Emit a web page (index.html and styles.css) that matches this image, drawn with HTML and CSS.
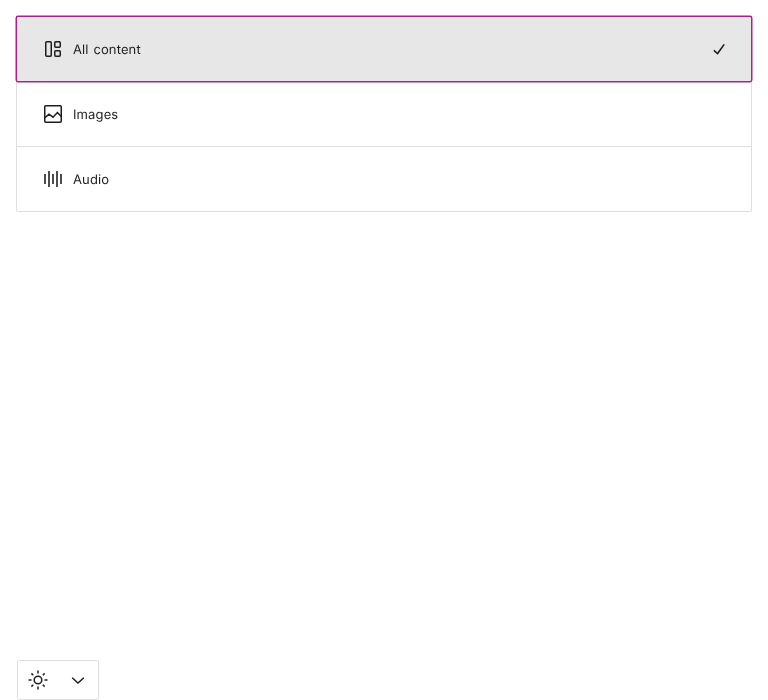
FILE: index.html
```
<!DOCTYPE html>
<html lang="en">
<head>
<meta charset="utf-8">
<title>Search types</title>
<link rel="stylesheet" href="styles.css">
</head>
<body>
<ul class="list">
  <li class="item item-active">
    <svg class="icon" viewBox="0 0 24 24"><rect x="4.75" y="4.75" width="5.5" height="14.5" rx="1"/><rect x="13.75" y="4.75" width="5.5" height="5.5" rx="1"/><rect x="13.75" y="13.75" width="5.5" height="5.5" rx="1"/></svg>
    <span class="label">All content</span>
    <svg class="icon check" viewBox="0 0 24 24"><path d="M6.8 13.4l3.8 3.1L17.2 7.4"/></svg>
  </li>
  <li class="item">
    <svg class="icon" viewBox="0 0 24 24"><rect x="3.75" y="3.75" width="16.5" height="16.5" rx="1"/><path d="M4 15.6l4-3.4 4 3 4.4-4.6 3.9 4"/></svg>
    <span class="label">Images</span>
  </li>
  <li class="item">
    <svg class="icon wave" viewBox="0 0 24 24"><path d="M4 7v10M8 4v16M12 7v10M16 4v16M20 7v10"/></svg>
    <span class="label">Audio</span>
  </li>
</ul>
<div class="theme">
  <svg class="icon" viewBox="0 0 24 24"><circle cx="12" cy="12" r="3.8"/><path d="M12 2.5v3M12 18.5v3M2.5 12h3M18.5 12h3M5.4 5.4l1.8 1.8M16.8 16.8l1.8 1.8M5.4 18.6l1.8-1.8M16.8 7.2l1.8-1.8"/></svg>
  <svg class="icon" viewBox="0 0 24 24"><path d="M6.2 9.8L12 15l5.8-5.2"/></svg>
</div>
</body>
</html>
```
FILE: styles.css
```
* { box-sizing: border-box; }
body {
  margin: 0;
  height: 700px;
  padding: 16px 16px 0;
  display: flex;
  flex-direction: column;
  justify-content: space-between;
  overflow: hidden;
  background: #fff;
  color: #1e1e1e;
  font: 13px/17px Inter, sans-serif;
}
.list {
  list-style: none;
  margin: 0;
  padding: 0;
  border: 1px solid #dedede;
  border-radius: 2px;
}
.item {
  display: flex;
  align-items: center;
  height: 64px;
  padding: 0 20px 0 24px;
}
.item + .item {
  height: 65px;
  border-top: 1px solid #dedede;
}
.item-active {
  background: #e7e7e7;
  border-radius: 1px;
  box-shadow: 0 0 0 1.5px #b01e86;
  position: relative;
}
.icon {
  width: 24px;
  height: 24px;
  flex: none;
  fill: none;
  stroke: #1e1e1e;
  stroke-width: 1.5;
}
.wave { stroke: #4d4d4d; stroke-width: 2; }
.check { stroke-width: 1.6; }
.label {
  flex: 1;
  margin-left: 8px;
  padding-top: 3px;
  letter-spacing: 0.12px;
  word-spacing: 1px;
  text-rendering: geometricPrecision;
  will-change: transform;
}
.theme {
  display: flex;
  align-items: center;
  justify-content: space-between;
  width: 82px;
  height: 40px;
  margin-left: 1px;
  padding: 0 8px;
  border: 1px solid #dedede;
  border-radius: 2px;
}
```
